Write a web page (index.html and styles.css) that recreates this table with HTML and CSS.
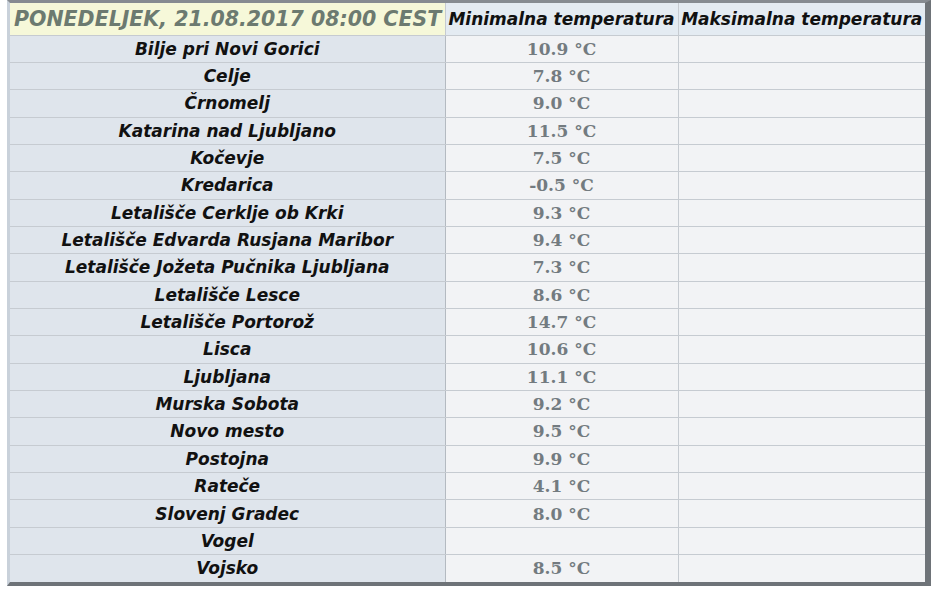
FILE: index.html
```html
<!DOCTYPE html>
<html>
<head>
<meta charset="utf-8">
<link rel="stylesheet" href="styles.css">
</head>
<body>
<div class="frame">
<table class="temps">
<colgroup><col class="c1"><col class="c2"><col class="c3"></colgroup>
<thead>
<tr><th class="title">PONEDELJEK, 21.08.2017 08:00 CEST</th><th class="hd">Minimalna temperatura</th><th class="hd">Maksimalna temperatura</th></tr>
</thead>
<tbody>
<tr><td class="st">Bilje pri Novi Gorici</td><td class="v">10.9 °C</td><td class="v"></td></tr>
<tr><td class="st">Celje</td><td class="v">7.8 °C</td><td class="v"></td></tr>
<tr><td class="st">Črnomelj</td><td class="v">9.0 °C</td><td class="v"></td></tr>
<tr><td class="st">Katarina nad Ljubljano</td><td class="v">11.5 °C</td><td class="v"></td></tr>
<tr><td class="st">Kočevje</td><td class="v">7.5 °C</td><td class="v"></td></tr>
<tr><td class="st">Kredarica</td><td class="v">-0.5 °C</td><td class="v"></td></tr>
<tr><td class="st">Letališče Cerklje ob Krki</td><td class="v">9.3 °C</td><td class="v"></td></tr>
<tr><td class="st">Letališče Edvarda Rusjana Maribor</td><td class="v">9.4 °C</td><td class="v"></td></tr>
<tr><td class="st">Letališče Jožeta Pučnika Ljubljana</td><td class="v">7.3 °C</td><td class="v"></td></tr>
<tr><td class="st">Letališče Lesce</td><td class="v">8.6 °C</td><td class="v"></td></tr>
<tr><td class="st">Letališče Portorož</td><td class="v">14.7 °C</td><td class="v"></td></tr>
<tr><td class="st">Lisca</td><td class="v">10.6 °C</td><td class="v"></td></tr>
<tr><td class="st">Ljubljana</td><td class="v">11.1 °C</td><td class="v"></td></tr>
<tr><td class="st">Murska Sobota</td><td class="v">9.2 °C</td><td class="v"></td></tr>
<tr><td class="st">Novo mesto</td><td class="v">9.5 °C</td><td class="v"></td></tr>
<tr><td class="st">Postojna</td><td class="v">9.9 °C</td><td class="v"></td></tr>
<tr><td class="st">Rateče</td><td class="v">4.1 °C</td><td class="v"></td></tr>
<tr><td class="st">Slovenj Gradec</td><td class="v">8.0 °C</td><td class="v"></td></tr>
<tr><td class="st">Vogel</td><td class="v"></td><td class="v"></td></tr>
<tr><td class="st">Vojsko</td><td class="v">8.5 °C</td><td class="v"></td></tr>
</tbody>
</table>
</div>
</body>
</html>
```
FILE: styles.css
```css
html, body {
  margin: 0;
  padding: 0;
  background: #ffffff;
}
.frame {
  margin-left: 7px;
  width: 915px;
  border-top: 3px solid #868b91;
  border-left: 3px solid #c9d1da;
  border-right: 6px solid #6e7378;
  border-bottom: 4px solid #6e7378;
  background: #f2f3f5;
}
.temps {
  width: 915px;
  border-collapse: collapse;
  table-layout: fixed;
}
.c1 { width: 435px; }
.c2 { width: 233px; }
.c3 { width: 247px; }
.temps th, .temps td {
  padding: 0;
  text-align: center;
  border: 1px solid #c6cbd1;
  white-space: nowrap;
  overflow: hidden;
}
.temps tr > :first-child { border-left: none; }
.temps tr > :last-child { border-right: none; }
.temps thead th { border-top: none; }
.temps tbody tr:last-child td { border-bottom: none; }
.temps thead tr { height: 32px; }
.temps tbody tr { height: 27.35px; }
.title {
  background: #f6f8d9;
  color: #6c7a70;
  font: italic bold 20.5px "DejaVu Sans", Verdana, sans-serif;
  text-align: left !important;
  padding-left: 4px !important;
}
.hd {
  background: #e4ebf2;
  color: #111111;
  font: italic bold 17px "DejaVu Sans", Verdana, sans-serif;
}
.st {
  background: #dfe5ec;
  color: #111111;
  font: italic bold 17px "DejaVu Sans", Verdana, sans-serif;
}
.v {
  background: #f2f3f5;
  color: #737b80;
  font: bold 17px "DejaVu Serif", Georgia, serif;
}
.temps td.st { border-right: 1px solid #b4bac1; }
```
